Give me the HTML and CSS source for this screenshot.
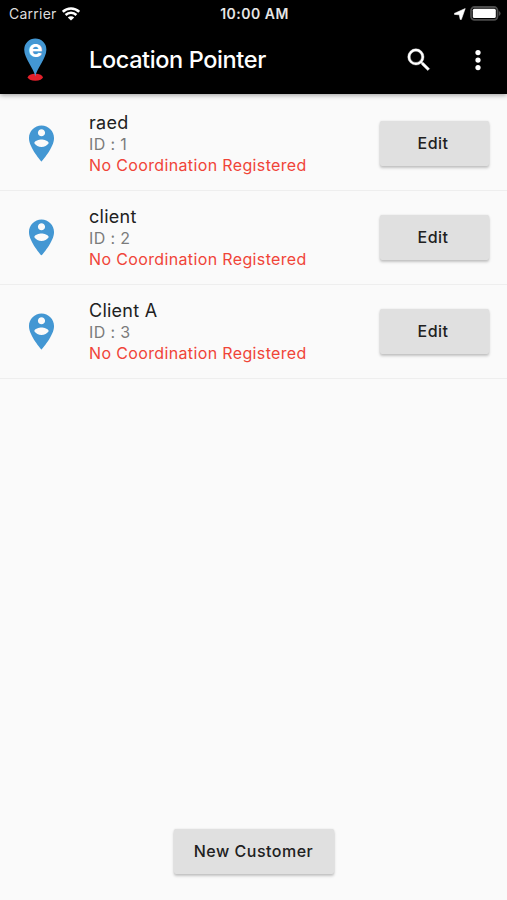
FILE: index.html
```
<!DOCTYPE html>
<html lang="en">
<head>
<meta charset="utf-8">
<meta name="viewport" content="width=device-width, initial-scale=1.0">
<title>Location Pointer</title>
<link rel="stylesheet" href="styles.css">
</head>
<body>
    <svg width="0" height="0" class="defs">
        <symbol id="pin" viewBox="0 0 24 24">
            <path d="M12 2C8.14 2 5 5.14 5 9c0 5.25 7 13 7 13s7-7.75 7-13c0-3.86-3.14-7-7-7zm0 2c1.1 0 2 .9 2 2 0 1.11-.9 2-2 2s-2-.89-2-2c0-1.1.9-2 2-2zm0 10c-1.67 0-3.14-.85-4-2.15.02-1.32 2.67-2.05 4-2.05s3.98.73 4 2.05c-.86 1.3-2.33 2.15-4 2.15z"/>
        </symbol>
    </svg>

    <header class="header">
        <div class="status">
            <div class="carrier">
                <span>Carrier</span>
                <svg class="wifi" width="18" height="14" viewBox="0 0 18 14">
                    <path d="M.8 4.8a11.8 11.8 0 0 1 16.4 0M3.6 8a7.6 7.6 0 0 1 10.8 0" fill="none" stroke="#fff" stroke-width="2.5"/>
                    <path d="M9 13.6 5.8 10.5a4.6 4.6 0 0 1 6.4 0z" fill="#fff"/>
                </svg>
            </div>
            <span class="time">10:00 AM</span>
            <div class="power">
                <svg width="12" height="12" viewBox="0 0 12 12"><path d="M11.2.6.3 5.4l.2 1 4.8.4.9 4.6 1.1.2z" fill="#fff" stroke="#fff" stroke-width=".6" stroke-linejoin="round"/></svg>
                <svg width="31" height="15" viewBox="0 0 31 15">
                    <rect x="1" y="1" width="26.5" height="12.8" rx="3.5" fill="none" stroke="#4c4c4c" stroke-width="1.8"/>
                    <rect x="2.8" y="2.8" width="23" height="9.2" rx="1.5" fill="#fff"/>
                    <path d="M28.8 5v5q1.8-.8 1.8-2.5T28.8 5z" fill="#4c4c4c"/>
                </svg>
            </div>
        </div>
        <div class="toolbar">
            <svg class="logo" width="24" height="60" viewBox="0 -8 24 60">
                <ellipse cx="12.3" cy="39.3" rx="7.5" ry="3.5" fill="#e3202b"/>
                <path d="M12.3 38.5C10.8 30.5 1.2 20.5 1.2 11.6a11.1 11.1 0 0 1 22.2 0c0 8.9-9.6 18.9-11.1 26.9z" fill="#4397d3"/>
                <text class="logo-e" x="12.4" y="18.8" text-anchor="middle">e</text>
            </svg>
            <h1>Location Pointer</h1>
            <svg class="search" width="30" height="30" viewBox="0 0 24 24" fill="#fff" stroke="#fff" stroke-width=".3">
                <path d="M15.5 14h-.79l-.28-.27A6.471 6.471 0 0 0 16 9.5 6.5 6.5 0 1 0 9.5 16c1.61 0 3.09-.59 4.23-1.57l.27.28v.79l5 4.99L20.49 19l-4.99-5zm-6 0C7.01 14 5 11.99 5 9.5S7.01 5 9.5 5 14 7.01 14 9.5 11.99 14 9.5 14z"/>
            </svg>
            <svg width="30" height="30" viewBox="0 0 24 24" fill="#fff">
                <circle cx="12" cy="6" r="2.1"/><circle cx="12" cy="12" r="2.1"/><circle cx="12" cy="18" r="2.1"/>
            </svg>
        </div>
    </header>

    <ul class="list">
        <li>
            <svg class="pin"><use href="#pin"/></svg>
            <div class="info">
                <p class="name">raed</p>
                <p class="id">ID : 1</p>
                <p class="error">No Coordination Registered</p>
            </div>
            <button class="btn edit">Edit</button>
        </li>
        <li>
            <svg class="pin"><use href="#pin"/></svg>
            <div class="info">
                <p class="name">client</p>
                <p class="id">ID : 2</p>
                <p class="error">No Coordination Registered</p>
            </div>
            <button class="btn edit">Edit</button>
        </li>
        <li>
            <svg class="pin"><use href="#pin"/></svg>
            <div class="info">
                <p class="name">Client A</p>
                <p class="id">ID : 3</p>
                <p class="error">No Coordination Registered</p>
            </div>
            <button class="btn edit">Edit</button>
        </li>
    </ul>

    <footer class="footer">
        <button class="btn new">New Customer</button>
    </footer>
</body>
</html>
```
FILE: styles.css
```
*{margin:0;padding:0;box-sizing:border-box}
body{height:100vh;display:flex;flex-direction:column;background:#fafafa;font-family:Inter,"Liberation Sans",sans-serif;overflow:hidden}
svg{display:block;flex:none}
.defs{position:absolute}

.header{height:94px;background:#000;color:#fff;box-shadow:0 1px 5px rgba(0,0,0,.4)}
.status{height:27px;display:grid;grid-template-columns:1fr auto 1fr;align-items:center;padding:0 6px 0 9px;font-size:14px}
.carrier{display:flex;align-items:center;gap:5px;color:#ddd;letter-spacing:.25px}
.time{margin-left:-1px;font-weight:600;font-size:14px;letter-spacing:.5px;color:#e6e6e6}
.power{display:flex;align-items:center;justify-content:flex-end;gap:4px}
.toolbar{height:66px;display:flex;align-items:center;padding:0 14px 0 23px}
.toolbar h1{flex:1;margin:-2px 0 0 42px;font-size:23.5px;font-weight:500;letter-spacing:-.38px}
.logo{margin-top:-1px}
.logo-e{font-size:24px;font-weight:700;fill:#fff}
.search{margin-right:29px}

.list{list-style:none}
.list li{height:94px;display:flex;align-items:center;padding:0 18px 0 20px;border-bottom:1px solid #eee}
.list li:first-child{height:97px;padding-top:3px}
.pin{width:43px;height:43px;fill:#4397d3}
.info{flex:1;margin-left:26px;padding-top:1px;font-size:16px;line-height:21px;letter-spacing:.36px}
.name{margin-bottom:1px;font-size:18px;letter-spacing:.25px;color:#212121}
.id{color:#7b7b7b}
.error{color:#f04438}

.btn{height:45px;padding-bottom:2px;border:0;border-radius:2px;background:#e0e0e0;color:#212121;font-family:inherit;font-size:16px;font-weight:500;letter-spacing:.5px;box-shadow:0 2px 3px rgba(0,0,0,.22),0 0 2px rgba(0,0,0,.1)}
.edit{width:109px;padding-right:3px}
.new{width:160px}
.footer{margin-top:auto;padding-bottom:26px;display:flex;justify-content:center}
```
